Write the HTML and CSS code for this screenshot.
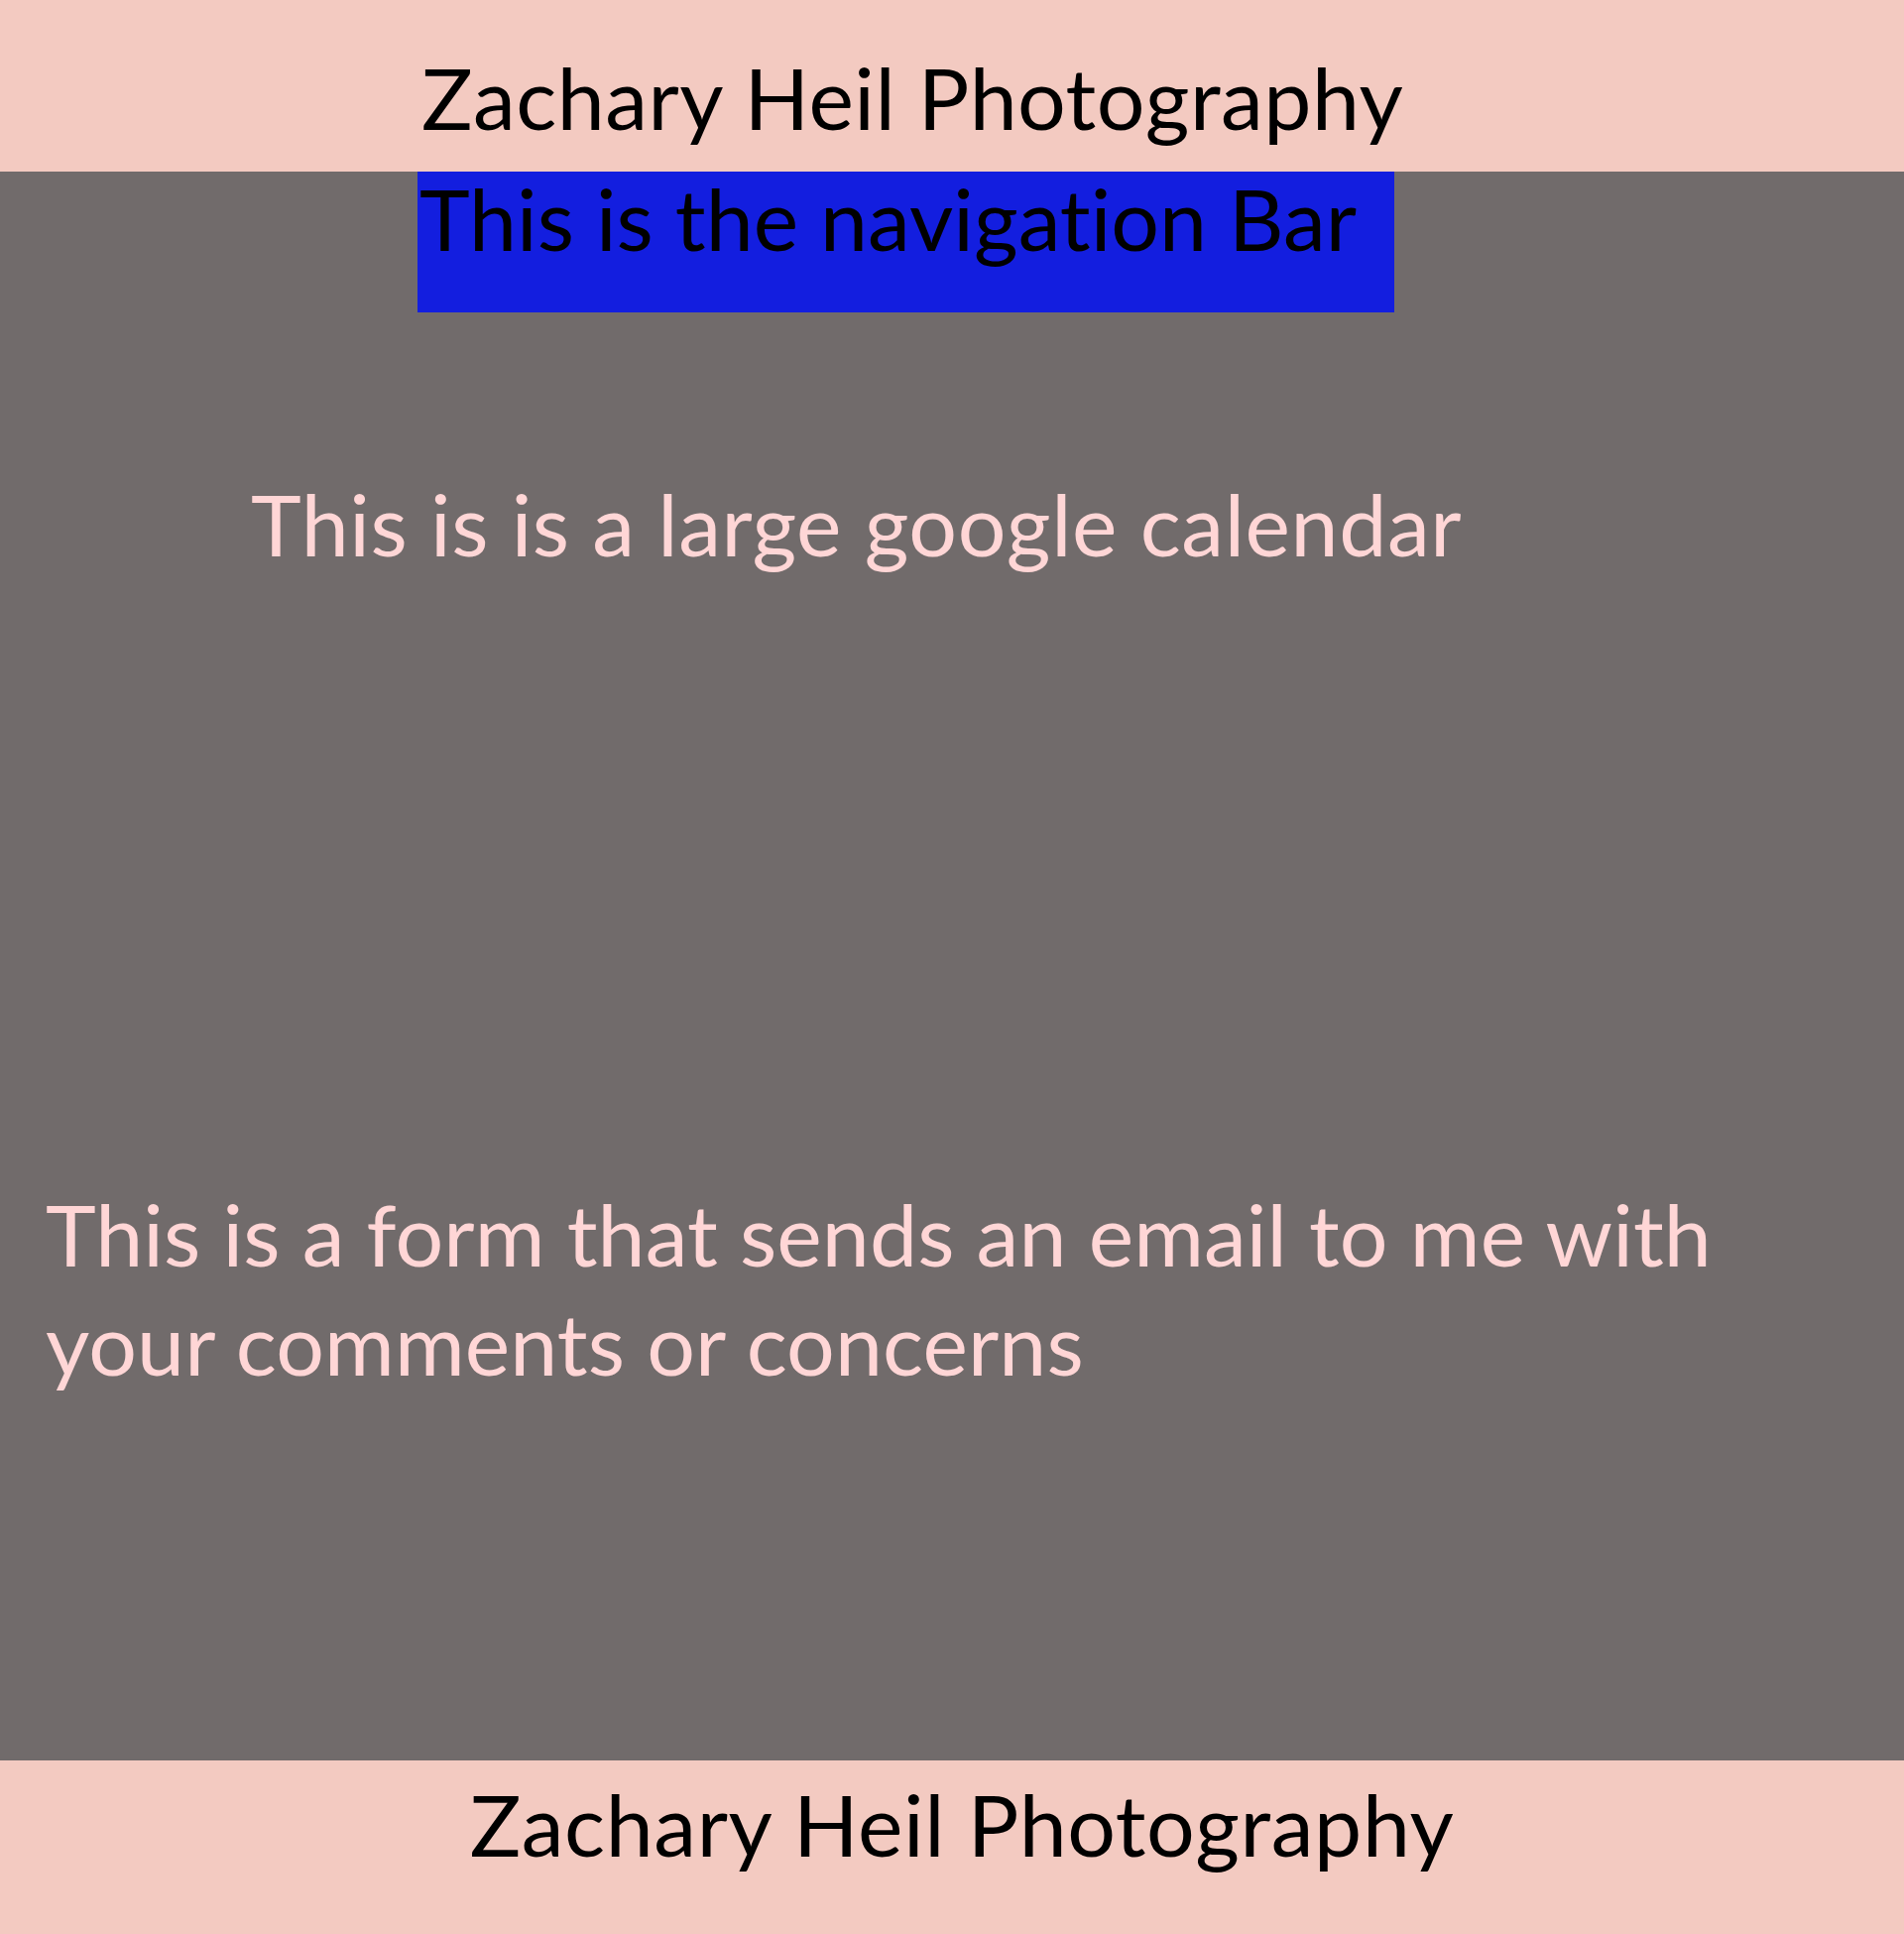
FILE: index.html
```html
<!DOCTYPE html>
<html lang="en">
<head>
    <meta charset="UTF-8">
    <meta name="viewport" content="width=device-width, initial-scale=1.0">
    <title>Zachary Heil Photography</title>
    <link rel="stylesheet" href="styles.css">
</head>
<body>
    <header class="site-header">
        <div class="inner">
            <h1 class="site-title">Zachary Heil Photography</h1>
        </div>
    </header>

    <main class="content">
        <nav class="inner nav-bar">This is the navigation Bar</nav>

        <section class="calendar">This is is a large google calendar</section>

        <section class="contact-form">This is a form that sends an email to me with your comments or concerns</section>
    </main>

    <footer class="site-footer">Zachary Heil Photography</footer>
</body>
</html>
```

FILE: styles.css
```css
body {
    margin: 0;
    font-family: "Lato", sans-serif;
    font-size: 86px;
    font-variant-ligatures: none; /* no "ti" ligature */
    background-color: #716b6b; /* grey page */
}
.inner {
    width: 985px;
    margin-left: 421px;
}
.site-header {
    background-color: #f3cac1; /* light pink band */
    height: 173px;
    padding-top: 46px;
    box-sizing: border-box;
}
.site-title {
    margin: 0;
    padding-left: 4px;
    font-size: 86px;
    font-weight: normal;
    line-height: 1.2;
    letter-spacing: 0.5px;
    white-space: nowrap;
    color: black;
}
.content {
    padding-bottom: 366px;
}
.nav-bar {
    background-color: #131edf; /* blue bar */
    height: 142px;
    padding: 4px 0 0 2px;
    box-sizing: border-box;
    line-height: 86px;
    white-space: nowrap;
    color: black;
}
.calendar {
    margin-top: 158px;
    padding-left: 253px;
    line-height: 110px;
    letter-spacing: 0.6px;
    color: #ffd6d6;
}
.contact-form {
    margin-top: 606px;
    padding-left: 46px;
    max-width: 1740px;
    line-height: 110px;
    letter-spacing: 0.1px;
    color: #ffd6d6;
}
.site-footer {
    background-color: #f3cac1;
    height: 175px;
    padding: 12px 0 0 20px;
    box-sizing: border-box;
    text-align: center;
    line-height: 1.2;
    letter-spacing: 0.6px;
    color: black;
}
```
